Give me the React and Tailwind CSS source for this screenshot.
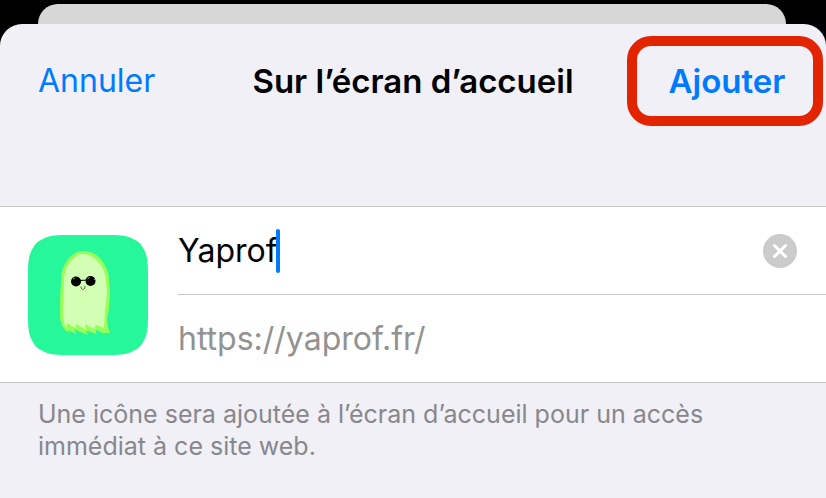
function GhostIcon() {
  return (
    <svg viewBox="0 0 120 120" className="size-[120px] shrink-0" role="img" aria-label="Yaprof">
      <path
        d="M38 0H82C94 0 101 1 107 5C111 7 113 9 115 13C119 19 120 26 120 38V82C120 94 119 101 115 107C113 111 111 113 107 115C101 119 94 120 82 120H38C26 120 19 119 13 115C9 113 7 111 5 107C1 101 0 94 0 82V38C0 26 1 19 5 13C7 9 9 7 13 5C19 1 26 0 38 0Z"
        fill="#26f79b"
      />
      <path
        d="M33 46C33 36 36 28 42 22C46 18 50 16 55 16C62 16 67 18 72 23C78 30 81 38 81 45L82 58L81 74L79 84L80 92L82 98L75 98L68 95L68 99L60 96L58 96L60 100L50 96L46 94L48 99L40 95L41 98C36 95 33 90 32 83L32 65Z"
        fill="#96ff58"
      />
      <path
        d="M36 47C36 37 39 30 44 25C48 21 51 19 55 19C61 19 66 22 70 27C75 32 78 39 78 47L79 58L77 76L76 93L68 90L66 94L57 89L58 95L48 89L47 93L39 88L38 93C36 89 35 84 35 78Z"
        fill="#d3ffb5"
      />
      <circle cx="48" cy="46.500" r="5" fill="#000" />
      <circle cx="62.500" cy="46" r="5" fill="#000" />
      <path d="M50 45.500L62 45" stroke="#000" strokeWidth="1.200" />
      <path d="M45 44l2-1M59.500 44l2-1.500M66 44l1 1" stroke="#8b9a80" strokeWidth="1" />
      <path d="M53 51.500C53 55.500 57 55.500 57 51" fill="none" stroke="#4c5b3d" strokeWidth="1" />
    </svg>
  );
}

export default function App() {
  return (
    <div className="flex min-h-screen flex-col bg-black pt-1 font-['Inter','Liberation_Sans',sans-serif]">
      <div className="mr-10 ml-[38px] h-5 rounded-t-[20px] bg-[#d7d7d7]" />
      <main className="flex grow flex-col rounded-t-[22px] bg-[#f1f0f6]">
        <header className="grid grid-cols-[1fr_auto_1fr] items-center pt-3 pb-20 text-[33px] leading-10">
          <button type="button" className="justify-self-start pl-[38px] text-[32px] text-[#007aff]">
            Annuler
          </button>
          <h1 className="font-semibold">Sur l’écran d’accueil</h1>
          <button
            type="button"
            className="mr-[3px] h-[90px] w-[196px] justify-self-end rounded-[24px] border-[10px] border-[#e22400] pl-1 font-semibold text-[#007aff]"
          >
            Ajouter
          </button>
        </header>
        <section className="flex items-center border-y border-[#c6c6c8] bg-white pl-7 text-[32px] leading-10">
          <GhostIcon />
          <div className="ml-[30px] min-w-0 grow">
            <div className="flex h-[88px] items-center border-b border-[#c6c6c8] pr-[29px]">
              <input
                type="text"
                aria-label="Nom"
                defaultValue="Yaprof"
                className="field-sizing-content min-w-0 text-black outline-none"
              />
              <span className="-ml-0.5 h-11 w-1 rounded-sm bg-[#007aff]" />
              <button
                type="button"
                aria-label="Effacer"
                className="ml-auto flex size-[34px] items-center justify-center rounded-full bg-[#cbcbcb]"
              >
                <svg viewBox="0 0 34 34" className="size-[34px]" fill="none" stroke="#fff" strokeWidth="3" strokeLinecap="round">
                  <path d="M11.500 11.500L22.500 22.500M22.500 11.500L11.500 22.500" />
                </svg>
              </button>
            </div>
            <p className="flex h-[87px] items-center text-[#929292]">https://yaprof.fr/</p>
          </div>
        </section>
        <p className="px-[38px] pt-[15px] text-[25px] leading-8 text-[#87878c]">
          Une icône sera ajoutée à l’écran d’accueil pour un accès immédiat à ce site web.
        </p>
      </main>
    </div>
  );
}
